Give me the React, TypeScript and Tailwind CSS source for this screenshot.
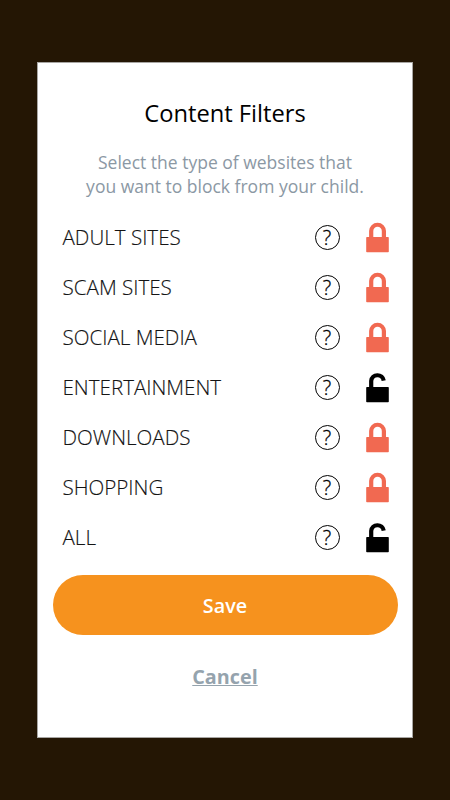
"use client";

import React, { useState } from "react";
import clsx from "clsx";

interface Filter {
  name: string;
  locked: boolean;
}

const initialFilters: Filter[] = [
  { name: "ADULT SITES", locked: true },
  { name: "SCAM SITES", locked: true },
  { name: "SOCIAL MEDIA", locked: true },
  { name: "ENTERTAINMENT", locked: false },
  { name: "DOWNLOADS", locked: true },
  { name: "SHOPPING", locked: true },
  { name: "ALL", locked: false },
];

function LockIcon({ locked }: { locked: boolean }) {
  return (
    <svg width="23" height="32" viewBox="0 -0.3 23 32" fill="none" className="block">
      <rect x="0.2" y="14.7" width="22.6" height="15.3" rx="0.8" fill="currentColor" />
      <path
        d={locked ? "M5.2 16V8.8a6.35 6.35 0 0 1 12.7 0V16" : "M5.2 16V8.6a6.3 6.3 0 0 1 12.5-0.3"}
        stroke="currentColor"
        strokeWidth="4.2"
      />
    </svg>
  );
}

function HelpIcon() {
  return (
    <span className="flex h-[25px] w-[25px] items-center justify-center rounded-full border-[1.2px] border-black text-[20px] leading-[28px] font-light text-black [-webkit-text-stroke:0.3px_black]">
      ?
    </span>
  );
}

export default function App() {
  const [filters, setFilters] = useState(initialFilters);

  const toggle = (name: string) =>
    setFilters(filters.map((f) => (f.name === name ? { ...f, locked: !f.locked } : f)));

  return (
    <div className="flex h-screen w-full items-start justify-center overflow-hidden bg-[#241604] pt-[62px] font-['Open_Sans',sans-serif]">
      <div className="flex h-[676px] w-[376px] flex-col items-center border border-[#a8a6a3] bg-white">
        <h1 className="mt-[32px] text-[23.7px] leading-9 font-normal text-black">Content Filters</h1>
        <p className="mt-[19px] text-center text-[17.5px] leading-6 text-[#8b98a4]">
          Select the type of websites that
          <br />
          you want to block from your child.
        </p>

        <ul className="mt-[14.5px] w-full pr-[23.5px] pl-[24.5px]">
          {filters.map((f) => (
            <li key={f.name} className="flex h-[50px] items-center">
              <span className="flex-1 text-[20.6px] font-light text-[#111111] [-webkit-text-stroke:0.15px_#222222]">
                {f.name}
              </span>
              <button type="button" className="mr-[26px]" aria-label="Help">
                <HelpIcon />
              </button>
              <button
                type="button"
                aria-label="Toggle filter"
                onClick={() => toggle(f.name)}
                className={clsx(f.locked ? "text-[#f16951]" : "text-black")}
              >
                <LockIcon locked={f.locked} />
              </button>
            </li>
          ))}
        </ul>

        <button
          type="button"
          className="mt-[12.5px] h-[60px] w-[345px] shrink-0 rounded-full bg-[#f6921e] pt-px text-[19.8px] font-semibold text-white"
        >
          Save
        </button>
        <button type="button" className="mt-[28px] text-[19.8px] leading-7 font-bold text-[#95a3ad] underline">
          Cancel
        </button>
      </div>
    </div>
  );
}
